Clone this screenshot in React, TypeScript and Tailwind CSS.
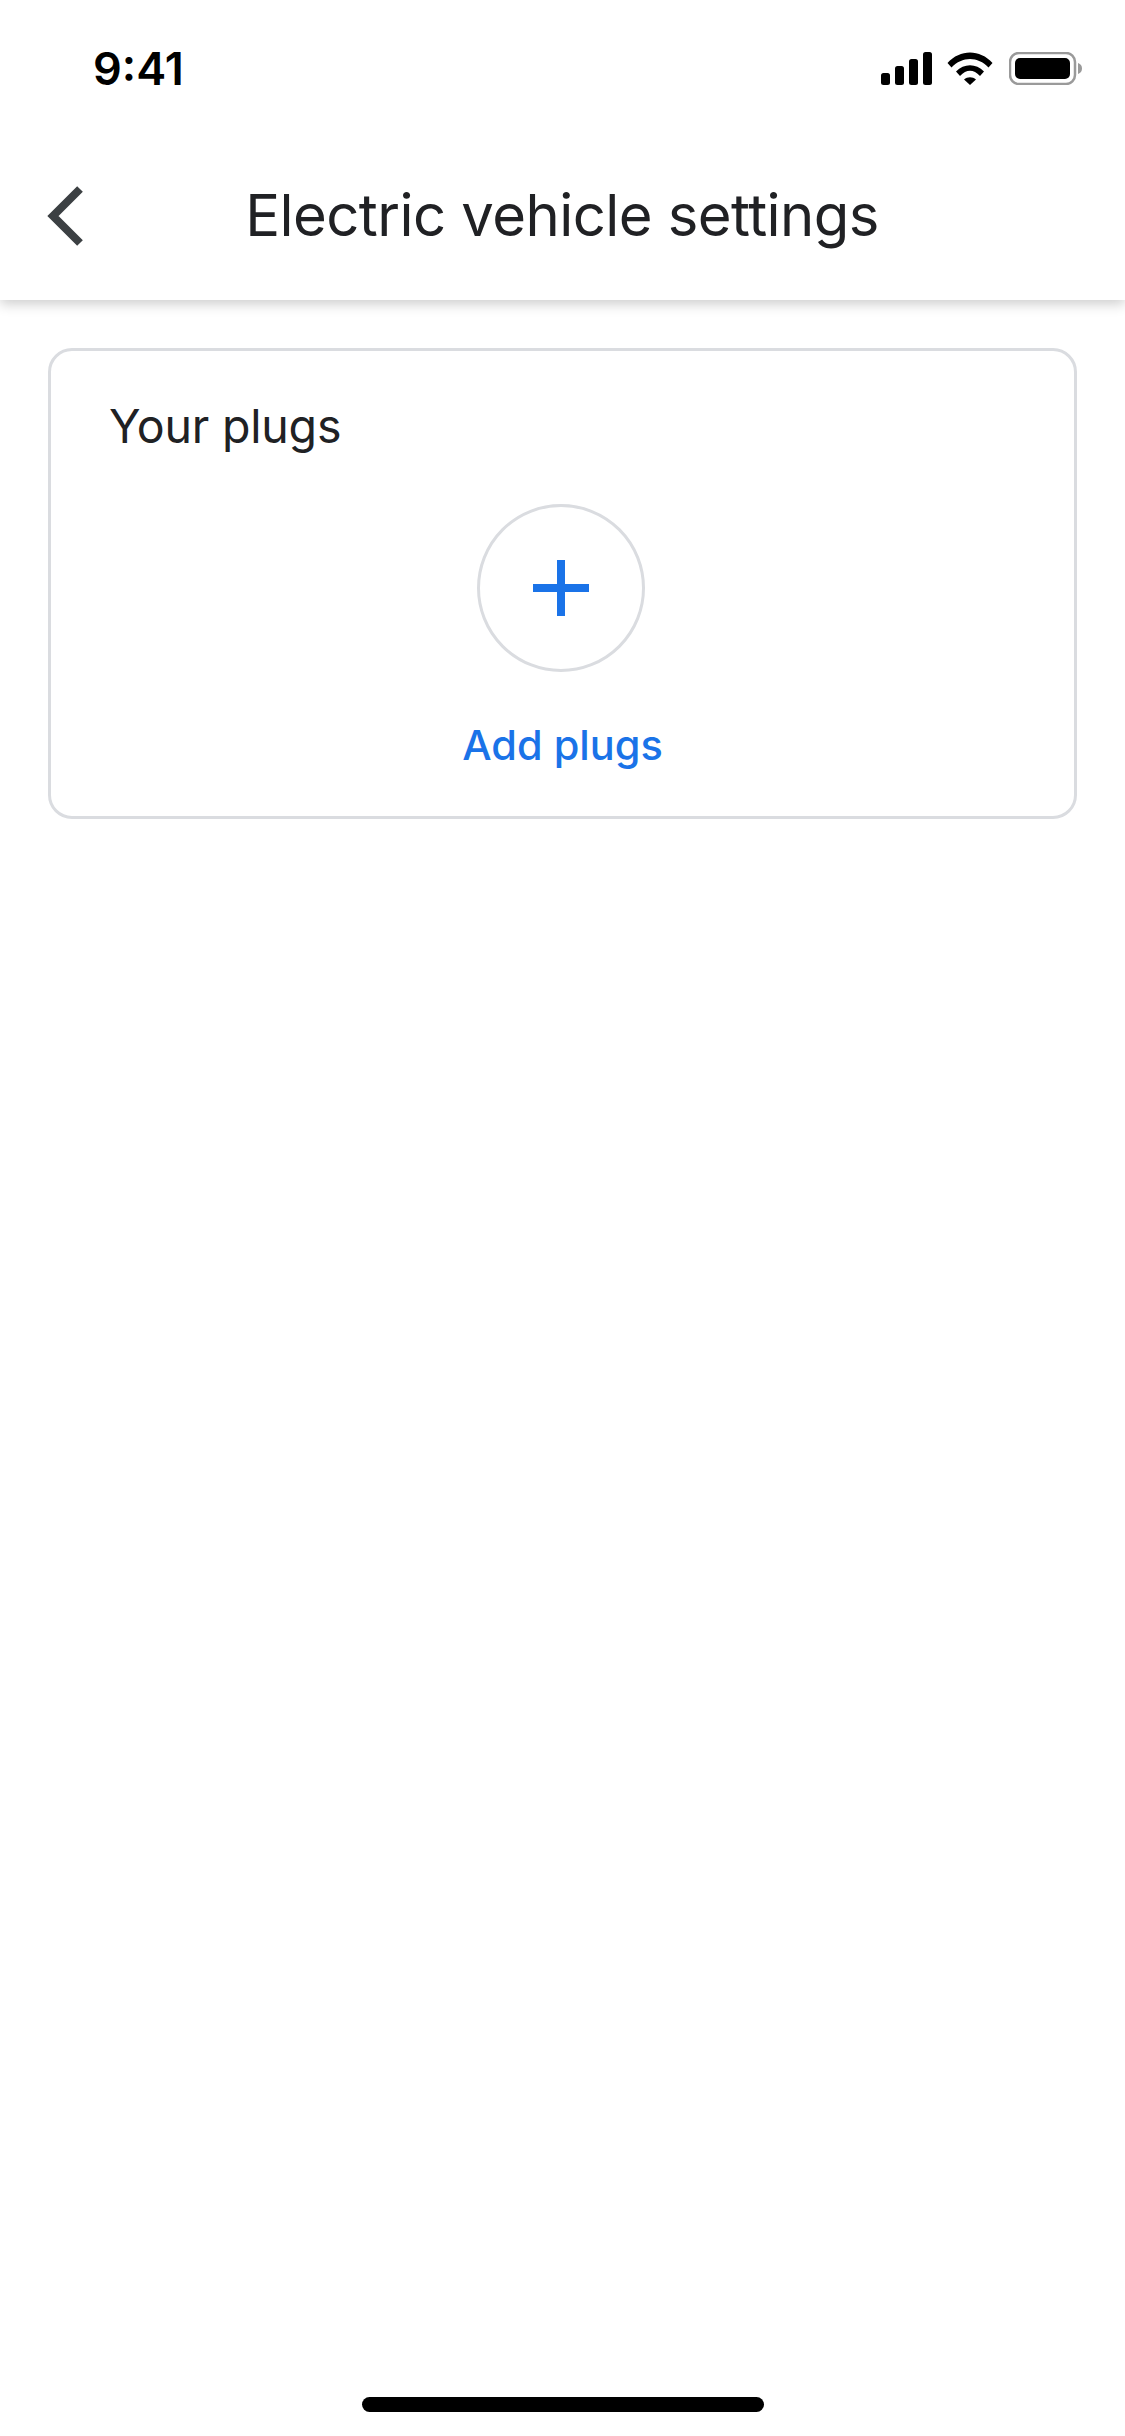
export default function App() {
  return (
    <div className="relative w-[1125px] h-[2436px] bg-white flex flex-col overflow-hidden font-['Inter',sans-serif]">
      <header className="h-[300px] shrink-0 flex flex-col bg-white shadow-[0_4px_12px_rgba(0,0,0,0.2)] z-10">
        <div className="h-[132px] shrink-0 flex items-start justify-between pt-[42px] pl-[93px] pr-[43px]">
          <span className="text-[45px] leading-[54px] font-semibold text-black">9:41</span>
          <div className="flex items-center mt-[10px] gap-[14px]">
            <svg width="52" height="33" viewBox="0 0 52 33" fill="#000">
              <rect x="0" y="21" width="9" height="12" rx="2.5" />
              <rect x="14" y="14" width="9" height="19" rx="2.5" />
              <rect x="28" y="7" width="9" height="26" rx="2.5" />
              <rect x="42" y="0" width="9" height="33" rx="2.5" />
            </svg>
            <svg width="46" height="33" viewBox="0 0 46 33" fill="#000">
              <path d="M0.5 11 C13 -3 33 -3 45.5 11 L41.5 15.5 C31 4 15 4 4.5 15.5 Z" />
              <path d="M9 19.5 C17 11 29 11 37 19.5 L33 24 C26.5 17 19.500 17 13 24 Z" />
              <path d="M17 27.500 C20.500 24.500 25.500 24.500 29 27.500 L23 33 Z" />
            </svg>
            <svg width="73" height="33" viewBox="0 0 73 33" className="ml-[2px]">
              <rect x="1" y="1" width="65" height="31" rx="9" fill="none" stroke="#9a9a9a" strokeWidth="2.500" />
              <rect x="6" y="6" width="55" height="21" rx="5" fill="#000" />
              <path d="M69 11 C72 12 73 14 73 16.500 C73 19 72 21 69 22 Z" fill="#9a9a9a" />
            </svg>
          </div>
        </div>
        <div className="relative flex-1 flex items-center justify-center pb-[2px] pr-[1px]">
          <svg className="absolute left-[47px] top-[54px]" width="36" height="60" viewBox="0 0 36 60" fill="none">
            <path d="M33 3 L6 30 L33 57" stroke="#3c4043" strokeWidth="8" />
          </svg>
          <h1 className="text-[58px] leading-[72px] font-normal text-[#202124] tracking-[-0.55px]">Electric vehicle settings</h1>
        </div>
      </header>
      <main className="flex-1 px-[48px] pt-[48px]">
        <section className="h-[471px] rounded-[24px] border-[3px] border-[#dadce0] bg-white flex flex-col">
          <h2 className="ml-[58px] mt-[48px] text-[46.5px] leading-[54px] font-[420] tracking-[-0.2px] text-[#202124]">Your plugs</h2>
          <div className="flex flex-col items-center mt-[51px] pr-[3px]">
            <div className="w-[168px] h-[168px] rounded-full border-[3px] border-[#dadce0] flex items-center justify-center">
              <svg width="56" height="56" viewBox="0 0 56 56" fill="#1a73e8">
                <rect x="24" y="0" width="8" height="56" />
                <rect x="0" y="24" width="56" height="8" />
              </svg>
            </div>
            <span className="mt-[49px] text-[41.5px] leading-[48px] font-[450] text-[#1a73e8] pl-[3px]">Add plugs</span>
          </div>
        </section>
      </main>
      <div className="absolute left-[362px] top-[2397px] w-[402px] h-[15px] rounded-full bg-black" />
    </div>
  );
}
